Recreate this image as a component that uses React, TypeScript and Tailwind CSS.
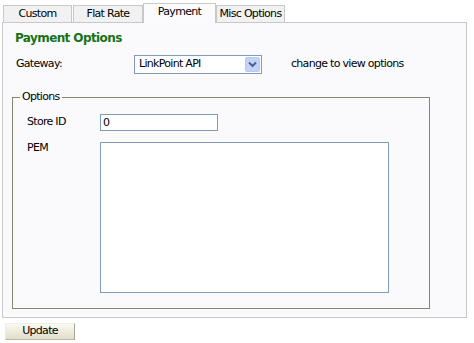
import React from "react";

const font = { fontFamily: '"DejaVu Sans", Verdana, sans-serif' };

function Tab({ label, active, className }: { label: string; active?: boolean; className: string }) {
  return (
    <div
      className={
        "flex items-center justify-center border border-b-0 border-[#c8c8c8] text-[11px] text-black " +
        (active ? "relative z-10 h-[20px] -mb-px bg-[#fbfbfd] pb-[2px]" : "h-[17px] bg-[#f1f1f1]") +
        " " +
        className
      }
    >
      {label}
    </div>
  );
}

export default function App() {
  return (
    <div className="w-[474px] h-[343px] bg-white text-[11px] text-black tracking-[-0.7px]" style={font}>
      <div className="flex items-end h-[22px] pl-[3px]">
        <Tab label="Custom" className="w-[69px]" />
        <Tab label="Flat Rate" className="w-[70px] ml-px" />
        <Tab label="Payment" active className="w-[73px]" />
        <Tab label="Misc Options" className="w-[69px]" />
      </div>
      <div className="ml-[2px] w-[465px] h-[296px] border border-[#c8c8c8] bg-[#fafafd] flex flex-col">
        <div className="pl-[12px] pt-[7px] h-[24px] text-[12px] font-bold text-[#157315] tracking-[-0.6px] leading-[16px]">
          Payment Options
        </div>
        <div className="flex items-center h-[19px] mt-[8px]">
          <div className="w-[131px] pl-[13px]">Gateway:</div>
          <div className="w-[128px] h-[19px] border border-[#7f9db9] bg-white flex items-center justify-between pl-[4px] pr-px">
            <span>LinkPoint API</span>
            <div className="w-[15px] h-[15px] rounded-[2px] bg-[#c3d3f8] border border-[#b8c9f0] flex items-center justify-center">
              <svg width="9" height="7" viewBox="0 0 9 7">
                <path d="M1 1.5 L4.5 5 L8 1.5" stroke="#4d6185" strokeWidth="2" fill="none" />
              </svg>
            </div>
          </div>
          <div className="ml-[29px]">change to view options</div>
        </div>
        <div className="relative ml-[9px] mt-[23px] w-[418px] h-[212px] border border-[#86866f]">
          <div className="absolute -top-[8px] left-[7px] px-[2px] bg-[#fafafd] leading-[14px]">Options</div>
          <div className="flex items-center mt-[16px] h-[17px]">
            <div className="w-[87px] pl-[14px]">Store ID</div>
            <div className="w-[118px] h-[17px] border border-[#7f9db9] bg-white pl-[2px] leading-[15px]">0</div>
          </div>
          <div className="flex mt-[11px]">
            <div className="w-[87px] pl-[14px] leading-[12px]">PEM</div>
            <div className="w-[289px] h-[151px] border border-[#7f9db9] bg-white" />
          </div>
        </div>
      </div>
      <div className="pl-[5px] pt-[5px]">
        <div className="w-[70px] h-[17px] flex items-center justify-center bg-gradient-to-b from-[#fbfaf2] to-[#e0ddc9] border border-[#efeee4] border-r-[#a8a590] border-b-[#bdbaa6]">
          Update
        </div>
      </div>
    </div>
  );
}
